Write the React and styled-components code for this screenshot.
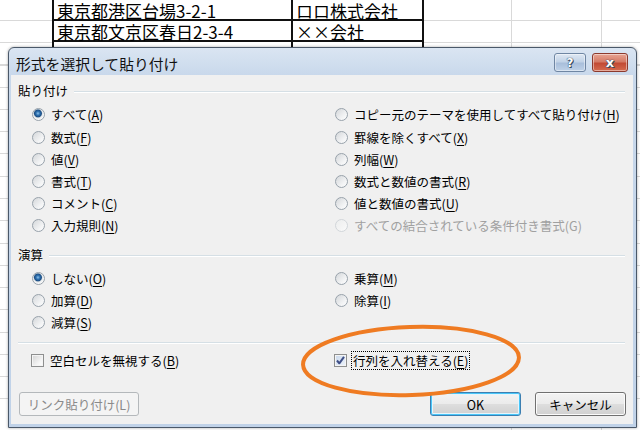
import React from 'react';
import styled, { createGlobalStyle } from 'styled-components';

const FONT = '"Noto Sans CJK JP", "Noto Sans", sans-serif';

const GlobalStyle = createGlobalStyle`
  html, body {
    margin: 0;
    padding: 0;
    background: #ffffff;
  }
  body {
    width: 640px;
    height: 430px;
    overflow: hidden;
    font-family: ${FONT};
  }
`;

const Sheet = styled.div`
  position: relative;
  width: 640px;
  height: 430px;
  overflow: hidden;
  background-color: #ffffff;
  background-image:
    linear-gradient(90deg, transparent 511px, #d9d9d9 511px 512px, transparent 512px 601px, #d9d9d9 601px 602px, transparent 602px),
    repeating-linear-gradient(180deg, transparent 0 20px, #d9d9d9 20px 21px, transparent 21px 22.25px);
`;

const Table = styled.div`
  display: grid;
  grid-template-columns: 239px 131px;
  grid-auto-rows: 21px;
  margin-left: 52px;
  width: fit-content;
  border-left: 2px solid #111;
`;

const Cell = styled.div`
  box-sizing: border-box;
  display: flex;
  align-items: flex-end;
  padding: 0 0 0 3px;
  border-right: 2px solid #111;
  border-bottom: ${(p) => (p.$last ? 'none' : '2px solid #111')};
  background: #ffffff;
  font-size: 17px;
  line-height: 16px;
  color: #000;
  white-space: nowrap;
`;

const Dialog = styled.div`
  position: absolute;
  left: 8px;
  top: 47px;
  width: 629px;
  height: 381px;
  box-sizing: border-box;
  display: flex;
  flex-direction: column;
  padding: 0 3px 3px 2px;
  border: 1px solid #4a5869;
  border-radius: 6px 6px 0 0;
  background: linear-gradient(180deg, #dae5f2 0, #c8d8eb 28px, #c0d2e8 100%);
  box-shadow: 0 0 3px rgba(0, 0, 0, 0.35);
`;

const TitleBar = styled.div`
  height: 28px;
  box-sizing: border-box;
  display: flex;
  align-items: flex-start;
  padding: 5px 5px 0 5px;
`;

const Title = styled.div`
  flex: 1;
  margin-top: 1px;
  font-size: 14.8px;
  line-height: 20px;
  color: #111;
`;

const CaptionButton = styled.div`
  width: ${(p) => (p.$close ? '36px' : '32px')};
  height: 19px;
  margin-left: ${(p) => (p.$close ? '6px' : '0')};
  box-sizing: border-box;
  display: flex;
  align-items: center;
  justify-content: center;
  border: 1px solid ${(p) => (p.$close ? '#8c3a2e' : '#6f86a3')};
  border-radius: 3px;
  background: ${(p) =>
    p.$close
      ? 'linear-gradient(180deg, #e8a493 0, #d47a66 45%, #c24a34 55%, #d56b4f 100%)'
      : 'linear-gradient(180deg, #dfe8f3 0, #c2d3e7 45%, #a9bfdb 55%, #bfd2e8 100%)'};
  box-shadow: inset 0 0 0 1px rgba(255, 255, 255, 0.45);
  color: #ffffff;
  font-family: "DejaVu Sans", sans-serif;
  font-weight: bold;
  font-size: ${(p) => (p.$close ? '13px' : '12px')};
  text-shadow: 0 0 1px #2c3e55, 0 0 1px #2c3e55, 1px 1px 0 #3a4d66;
`;

const Body = styled.div`
  flex: 1;
  display: flex;
  flex-direction: column;
  padding: 7px 8px 8px 7px;
  background: #f0f0f0;
  color: #000;
  font-size: 12.5px;
`;

const GroupHeader = styled.div`
  height: 17px;
  display: flex;
  align-items: center;
  gap: 6px;
  margin-top: ${(p) => p.$gap || 0}px;
  line-height: 17px;

  &::after {
    content: '';
    flex: 1;
    height: 1px;
    margin-top: 2px;
    background: #d5dfe5;
    box-shadow: 0 1px 0 #ffffff;
  }
`;

const OptionGrid = styled.div`
  display: grid;
  grid-template-columns: 303px 1fr;
  grid-template-rows: repeat(${(p) => p.$rows}, 22.2px);
  grid-auto-flow: column;
  margin: 4.5px 0 0 14px;
`;

const Option = styled.div`
  display: flex;
  align-items: center;
  gap: 6px;
  white-space: nowrap;
  color: ${(p) => (p.$disabled ? '#a0a0a0' : '#000')};
`;

const RadioDot = styled.span`
  width: 13px;
  height: 13px;
  flex: none;
  box-sizing: border-box;
  border-radius: 50%;
  border: 1px solid ${(p) => (p.$disabled ? '#d2d6da' : '#98a2ab')};
  background: ${(p) =>
    p.$checked
      ? 'radial-gradient(circle at 45% 40%, #8cc0ea 0, #2c6fae 2px, #1d4f85 3.5px, #8aa2b8 4px, #e6e9ec 4.6px, #f8f8f8 6px)'
      : p.$disabled
        ? 'linear-gradient(135deg, #eceded, #fafafa)'
        : 'linear-gradient(135deg, #d4d7da, #f4f5f6 70%, #fbfbfb)'};
`;

const Key = styled.span`
  text-decoration: ${(p) => (p.$plain ? 'none' : 'underline')};
  text-underline-offset: 2px;
`;

const Separator = styled.div`
  height: 1px;
  margin-top: 8px;
  background: #d5dfe5;
  box-shadow: 0 1px 0 #ffffff;
`;

const CheckRow = styled.div`
  display: grid;
  grid-template-columns: 303px 1fr;
  height: 22px;
  margin: 6px 0 0 13px;
`;

const CheckBox = styled.span`
  width: 13px;
  height: 13px;
  flex: none;
  box-sizing: border-box;
  display: flex;
  align-items: center;
  justify-content: center;
  border: 1px solid #8e8f8f;
  background: ${(p) =>
    p.$checked
      ? 'linear-gradient(135deg, #c9d8ec, #eef3fa)'
      : 'linear-gradient(135deg, #d3d3d3, #f6f6f6 70%, #fcfcfc)'};
  box-shadow: inset 0 0 0 1px #f4f4f4;
`;

const FocusLabel = styled.span`
  padding: 0 1px;
  margin-left: -2px;
  border: 1px dotted #000;
  line-height: 17px;
`;

const Footer = styled.div`
  display: flex;
  justify-content: space-between;
  margin: 21px 0 0 1px;
`;

const ButtonGroup = styled.div`
  display: flex;
  gap: 14px;
  margin-right: -1px;
`;

const Button = styled.button`
  width: ${(p) => p.$width}px;
  height: 24px;
  padding: 0;
  box-sizing: border-box;
  font-family: ${FONT};
  font-size: 12.5px;
  color: ${(p) => (p.disabled ? '#8a8a8a' : '#000')};
  border-radius: 3px;
  border: 1px solid ${(p) => (p.disabled ? '#b4b8bb' : p.$default ? '#3c7fb1' : '#707070')};
  background: ${(p) =>
    p.disabled
      ? '#f4f4f4'
      : 'linear-gradient(180deg, #f3f3f3 0, #ebebeb 48%, #dddddd 52%, #d0d0d0 100%)'};
  box-shadow: ${(p) =>
    p.disabled ? 'none' : p.$default ? 'inset 0 0 0 1px #48c6f9, inset 0 0 0 2px #e6f4fb' : 'inset 0 0 0 1px #fbfbfb'};
`;

const Annotation = styled.svg`
  position: absolute;
  left: 0;
  top: 0;
  pointer-events: none;
`;

const pasteOptions = [
  { label: 'すべて', key: 'A', checked: true },
  { label: '数式', key: 'F' },
  { label: '値', key: 'V' },
  { label: '書式', key: 'T' },
  { label: 'コメント', key: 'C' },
  { label: '入力規則', key: 'N' },
  { label: 'コピー元のテーマを使用してすべて貼り付け', key: 'H' },
  { label: '罫線を除くすべて', key: 'X' },
  { label: '列幅', key: 'W' },
  { label: '数式と数値の書式', key: 'R' },
  { label: '値と数値の書式', key: 'U' },
  { label: 'すべての結合されている条件付き書式', key: 'G', disabled: true },
];

const operationOptions = [
  { label: 'しない', key: 'O', checked: true },
  { label: '加算', key: 'D' },
  { label: '減算', key: 'S' },
  { label: '乗算', key: 'M' },
  { label: '除算', key: 'I' },
];

function RadioOption({ label, hotkey, checked, disabled }) {
  return (
    <Option $disabled={disabled}>
      <RadioDot $checked={checked} $disabled={disabled} />
      <span>
        {label}(<Key $plain={disabled}>{hotkey}</Key>)
      </span>
    </Option>
  );
}

function CheckMark() {
  return (
    <svg width="11" height="11" viewBox="0 0 11 11">
      <path d="M2 5.5 L4.3 8.3 L9 1.8" fill="none" stroke="#3f4f86" strokeWidth="2" strokeLinejoin="round" />
    </svg>
  );
}

export default function App() {
  return (
    <>
      <GlobalStyle />
      <Sheet>
        <Table>
          <Cell>東京都港区台場3-2-1</Cell>
          <Cell>ロロ株式会社</Cell>
          <Cell>東京都文京区春日2-3-4</Cell>
          <Cell>××会社</Cell>
          <Cell $last />
          <Cell $last />
        </Table>

        <Dialog>
          <TitleBar>
            <Title>形式を選択して貼り付け</Title>
            <CaptionButton>?</CaptionButton>
            <CaptionButton $close>x</CaptionButton>
          </TitleBar>
          <Body>
            <GroupHeader>貼り付け</GroupHeader>
            <OptionGrid $rows={6}>
              {pasteOptions.map((o) => (
                <RadioOption key={o.key} label={o.label} hotkey={o.key} checked={o.checked} disabled={o.disabled} />
              ))}
            </OptionGrid>

            <GroupHeader $gap={9}>演算</GroupHeader>
            <OptionGrid $rows={3}>
              {operationOptions.map((o) => (
                <RadioOption key={o.key} label={o.label} hotkey={o.key} checked={o.checked} />
              ))}
            </OptionGrid>

            <Separator />
            <CheckRow>
              <Option>
                <CheckBox />
                <span>
                  空白セルを無視する(<Key>B</Key>)
                </span>
              </Option>
              <Option>
                <CheckBox $checked>
                  <CheckMark />
                </CheckBox>
                <FocusLabel>
                  行列を入れ替える(<Key>E</Key>)
                </FocusLabel>
              </Option>
            </CheckRow>

            <Footer>
              <Button disabled $width={120}>
                リンク貼り付け(L)
              </Button>
              <ButtonGroup>
                <Button $default $width={91}>
                  OK
                </Button>
                <Button $width={91}>キャンセル</Button>
              </ButtonGroup>
            </Footer>
          </Body>
        </Dialog>

        <Annotation width="640" height="430">
          <ellipse cx="411" cy="361" rx="108" ry="34" fill="none" stroke="#ef7b22" strokeWidth="4" transform="rotate(-2 411 361)" />
        </Annotation>
      </Sheet>
    </>
  );
}
